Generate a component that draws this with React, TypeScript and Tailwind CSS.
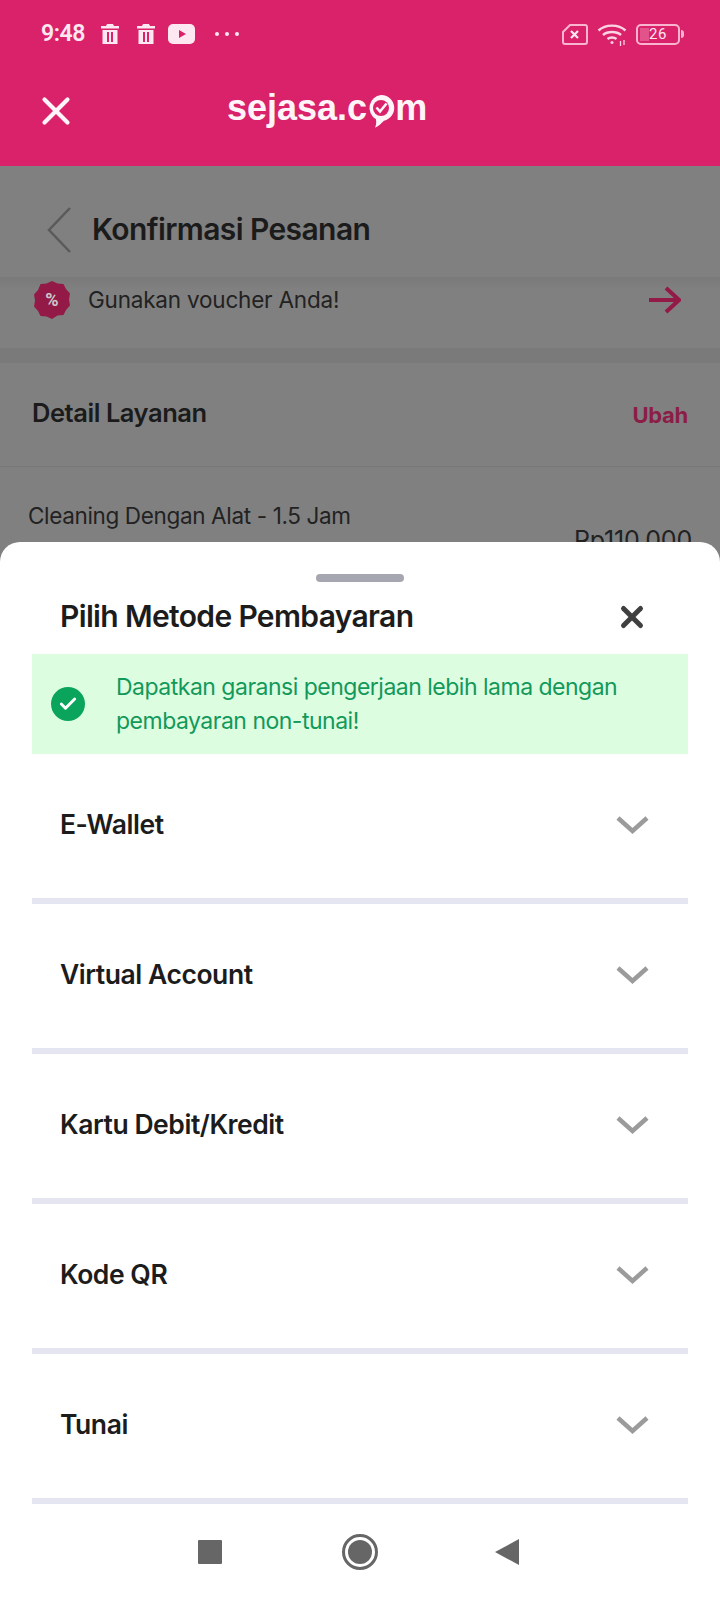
import { Check, X } from 'lucide-react';

const methods = ['E-Wallet', 'Virtual Account', 'Kartu Debit/Kredit', 'Kode QR', 'Tunai'];

function TrashIcon() {
  return (
    <svg width="20" height="22" viewBox="0 0 20 22" fill="#fde7f0">
      <path d="M7 1h6l1 2h5v2.500H1V3h5z" />
      <path d="M2.500 7h15v14h-15z" />
      <path d="M7 9h2v10H7zM11 9h2v10h-2z" fill="#d92269" />
    </svg>
  );
}

function StatusBar() {
  return (
    <div className="flex h-[66px] items-center pt-[2px] pl-[41px] pr-[36px] text-[#fde7f0]">
      <span className="w-[46px] text-[23px] font-semibold tracking-[-0.4px] font-['Roboto',sans-serif]">9:48</span>
      <div className="ml-[13px] flex items-center gap-[16px]">
        <TrashIcon />
        <TrashIcon />
      </div>
      <svg className="ml-[12px]" width="27" height="20" viewBox="0 0 27 20">
        <rect width="27" height="20" rx="5" fill="#fde7f0" />
        <path d="M11 6l7 4-7 4z" fill="#d92269" />
      </svg>
      <div className="ml-[20px] flex gap-[6px]">
        <span className="size-[4px] rounded-full bg-[#fde7f0]" />
        <span className="size-[4px] rounded-full bg-[#fde7f0]" />
        <span className="size-[4px] rounded-full bg-[#fde7f0]" />
      </div>
      <div className="ml-auto flex items-center text-[#f9b5d0]">
        <svg width="26" height="21" viewBox="0 0 26 21" fill="none" stroke="currentColor" strokeWidth="2">
          <path d="M8 1h15a2 2 0 0 1 2 2v15a2 2 0 0 1-2 2H3a2 2 0 0 1-2-2V8z" />
          <path d="M9 7l7 7M16 7l-7 7" stroke="#fde7f0" strokeWidth="2.200" />
        </svg>
        <svg className="ml-[9px]" width="30" height="23" viewBox="0 0 30 23" fill="none" stroke="#fbd5e4" strokeWidth="2.400">
          <path d="M1.500 7.500c7-6.500 20-6.500 27 0" />
          <path d="M6 12c4.500-4 13.500-4 18 0" />
          <path d="M10.500 16c2.500-2 6.500-2 9 0" />
          <circle cx="15" cy="19.500" r="1.500" fill="#fbd5e4" stroke="none" />
          <path d="M23.500 18v5M27 17v5" strokeWidth="1.300" />
        </svg>
        <div className="relative ml-[9px] flex h-[21px] w-[44px] items-center justify-center rounded-[5px] border-2 border-[#f9b5d0] text-[#fde7f0]">
          <span className="absolute left-[2px] top-[2px] h-[13px] w-[9px] bg-[#e2538c]" />
          <span className="relative text-[15px] leading-none tracking-[0.5px] font-['Roboto',sans-serif]">26</span>
        </div>
        <span className="ml-[1px] h-[8px] w-[3px] rounded-r-sm bg-[#f9b5d0]" />
      </div>
    </div>
  );
}

function Logo() {
  return (
    <div className="flex items-center text-[36px] font-bold leading-none text-[#fff5f9] font-['Liberation_Sans',sans-serif]">
      <span>sejasa.c</span>
      <svg className="mt-[7px] -mx-[1px]" width="30" height="35" viewBox="0 0 30 35">
        <path d="M15 1a13 13 0 0 1 3 25.700c-2.500 2.500-5 5-9 7 1-2.500 1.500-4.500 1-8.500A13 13 0 0 1 15 1z" fill="#fff5f9" />
        <circle cx="15" cy="14" r="8" fill="#d92269" />
        <path d="M10.500 13.500l3.500 4 6.500-8" fill="none" stroke="#fff5f9" strokeWidth="2.600" />
      </svg>
      <span>m</span>
    </div>
  );
}

function VoucherBadge() {
  return (
    <svg width="38" height="38" viewBox="0 0 38 38">
      <path
        d="M19 0l5.500 2.500 6 .5 2.500 5 4 4.500-1 6 1 6-4 4.500-2.500 5-6 .5L19 38l-5.500-2.500-6-.5-2.500-5-4-4.500 1-6-1-6 4-4.500L7.500 3l6-.5z"
        fill="#931a47"
      />
      <text x="19" y="25" textAnchor="middle" fontSize="18" fontWeight="700" fill="#c9c9c9" fontFamily="Roboto, sans-serif">
        %
      </text>
    </svg>
  );
}

function OrderBackground() {
  return (
    <div className="flex-1 bg-[#808080] font-['Inter',sans-serif] text-[#1b1b1b]">
      <div className="flex h-[112px] items-center border-b border-[#7a7a7a] pt-[16px] pl-[47px]">
        <svg width="25" height="46" viewBox="0 0 25 46" fill="none" stroke="#5a5a5a" strokeWidth="2.500">
          <path d="M23 1L2 23l21 22" />
        </svg>
        <span className="ml-[20px] text-[30px] font-semibold tracking-[-0.6px]">Konfirmasi Pesanan</span>
      </div>
      <div className="flex h-[70px] items-start pt-[3px] pl-[33px] pr-[39px] bg-gradient-to-b from-[#7a7a7a] to-[#808080] to-[12px]">
        <VoucherBadge />
        <span className="ml-[17px] mt-[2px] text-[22.500px] tracking-[-0.2px] text-[#222]">Gunakan voucher Anda!</span>
        <svg className="ml-auto mt-[5px]" width="32" height="28" viewBox="0 0 32 28" fill="none" stroke="#931a47" strokeWidth="4">
          <path d="M0 14h29M17 2l13 12-13 12" />
        </svg>
      </div>
      <div className="h-[15px] bg-[#7a7a7a]" />
      <div className="flex h-[104px] items-start justify-between border-b border-[#777] pl-[32px] pr-[32px] pt-[31px]">
        <span className="text-[25.500px] font-semibold tracking-[-0.45px]">Detail Layanan</span>
        <span className="mt-[5px] text-[22px] font-bold tracking-[-0.3px] text-[#8c1d47]">Ubah</span>
      </div>
      <div className="flex items-start justify-between pl-[28px] pr-[28px] pt-[32px]">
        <span className="text-[22.500px] tracking-[-0.35px] text-[#222]">Cleaning Dengan Alat - 1.5 Jam</span>
        <span className="mt-[23px] text-[25px] tracking-[-0.2px] text-[#222]">Rp110.000</span>
      </div>
    </div>
  );
}

function PaymentSheet() {
  return (
    <div className="absolute inset-x-0 bottom-0 flex h-[1058px] flex-col rounded-t-[20px] bg-white font-['Inter',sans-serif] text-[#1c1c1c]">
      <div className="mx-auto mt-[32px] h-[8px] w-[88px] rounded-full bg-[#a6a6b0]" />
      <div className="mb-[4px] flex h-[68px] items-center justify-between pl-[60px] pr-[71px]">
        <h2 className="text-[30px] font-semibold tracking-[-0.65px]">Pilih Metode Pembayaran</h2>
        <X className="mt-[2px] text-[#3f3f3f]" size={34} strokeWidth={3.500} />
      </div>
      <div className="mx-[32px] flex h-[100px] items-center bg-[#ddfde1] pl-[19px] text-[#12995a]">
        <span className="flex size-[34px] items-center justify-center rounded-full bg-[#0ba45c]">
          <Check className="text-white" size={20} strokeWidth={3.500} />
        </span>
        <p className="ml-[31px] text-[23px] leading-[34px] tracking-[-0.5px]">
          Dapatkan garansi pengerjaan lebih lama dengan
          <br />
          pembayaran non-tunai!
        </p>
      </div>
      <ul>
        {methods.map((method) => (
          <li key={method} className="mx-[32px] flex h-[150px] items-center justify-between border-b-[6px] border-[#e5e5f2] pb-[2px] pl-[28px] pr-[39px]">
            <span className="text-[26.500px] font-semibold tracking-[-0.45px]">{method}</span>
            <svg width="33" height="19" viewBox="0 0 33 19" fill="none" stroke="#9b9b9b" strokeWidth="4.500">
              <path d="M2 2l14.500 13L31 2" />
            </svg>
          </li>
        ))}
      </ul>
      <nav className="flex flex-1 items-center justify-center pb-[1px]">
        <span className="-ml-[4px] h-[24px] w-[24px] rounded-[1px] bg-[#666]" />
        <span className="ml-[120px] flex size-[36px] items-center justify-center rounded-full border-[3px] border-[#666]">
          <span className="size-[24px] rounded-full bg-[#666]" />
        </span>
        <svg className="ml-[117px]" width="24" height="26" viewBox="0 0 24 26" fill="#666">
          <path d="M24 0v26L0 13z" />
        </svg>
      </nav>
    </div>
  );
}

export default function App() {
  return (
    <div className="relative flex h-[1600px] w-[720px] flex-col overflow-hidden">
      <header className="h-[166px] bg-[#d92269]">
        <StatusBar />
        <div className="relative flex h-[84px] items-center pl-[227px]">
          <X className="absolute left-[33px] top-[22px] text-[#fff5f9]" size={46} strokeWidth={2.200} />
          <Logo />
        </div>
      </header>
      <OrderBackground />
      <PaymentSheet />
    </div>
  );
}
